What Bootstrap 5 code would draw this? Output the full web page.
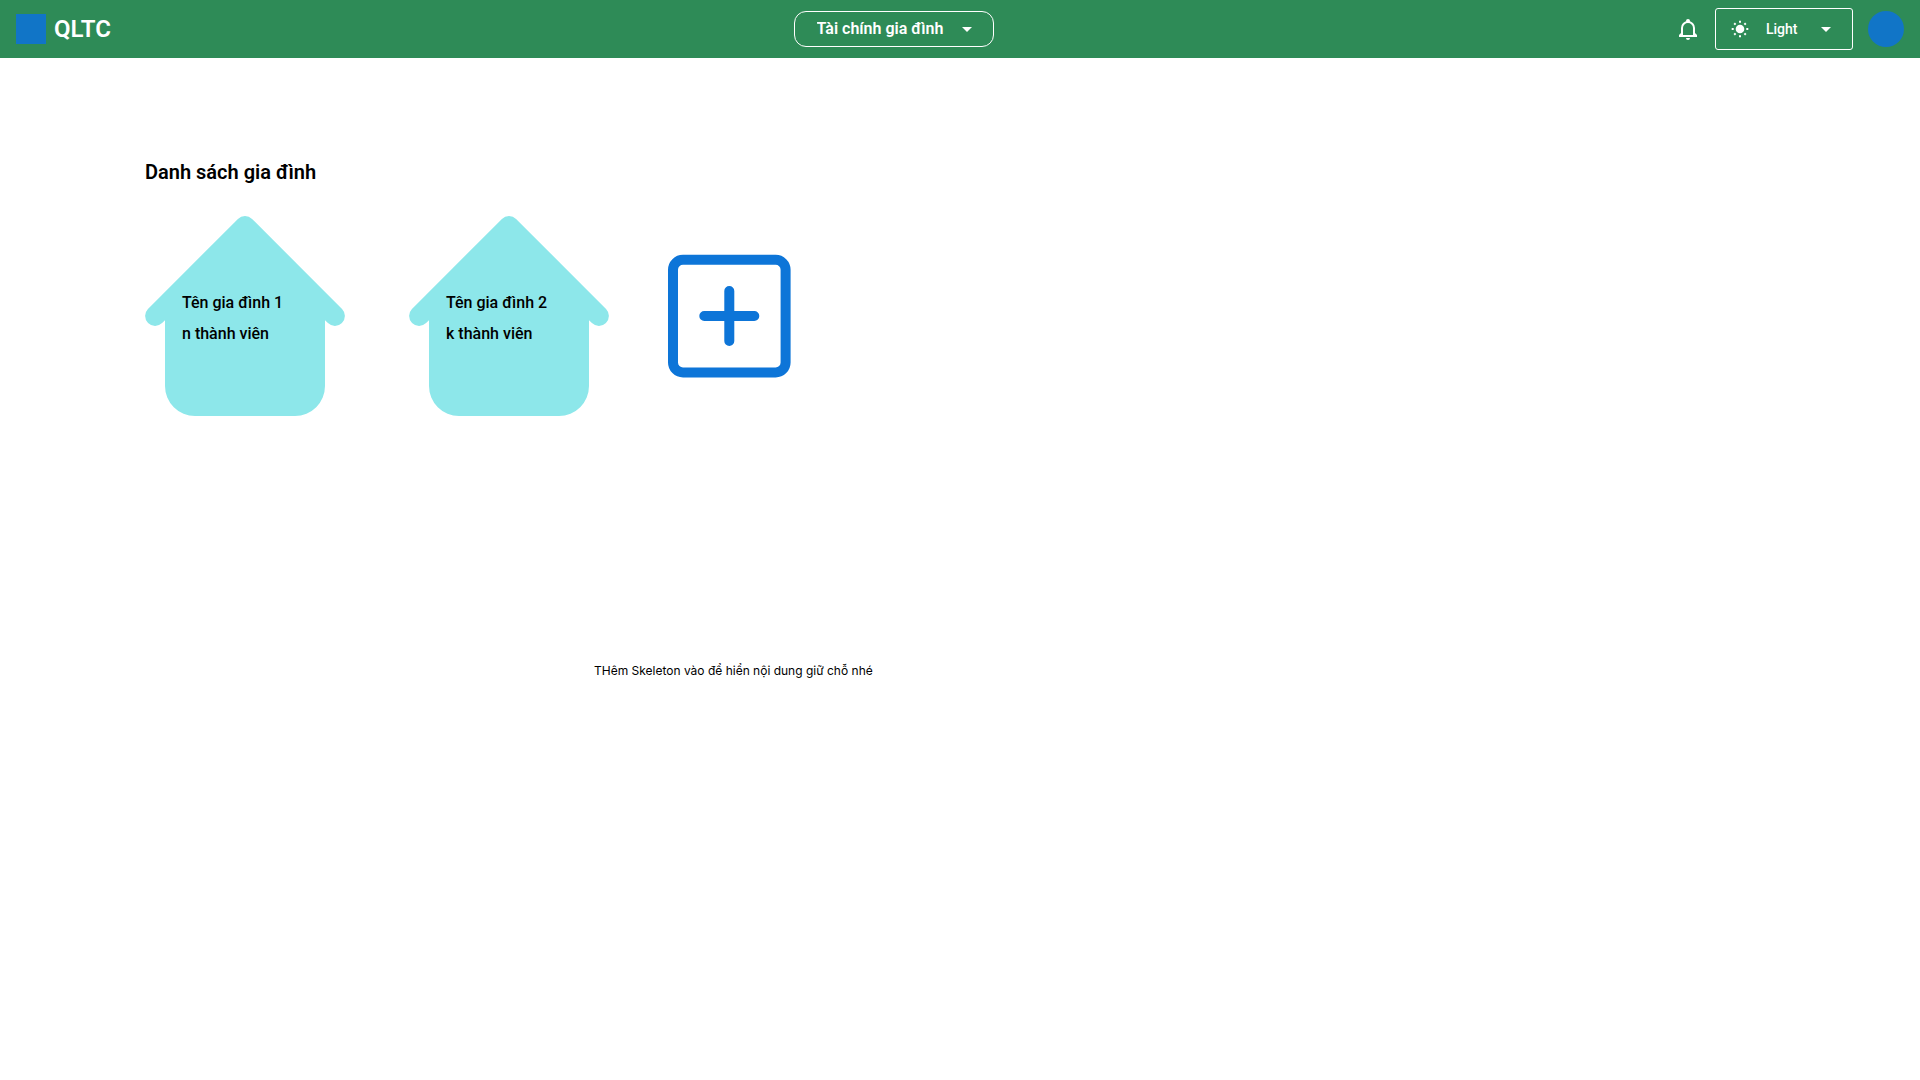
<!DOCTYPE html>
<html lang="vi">
<head>
<meta charset="utf-8">
<meta name="viewport" content="width=device-width, initial-scale=1">
<title>QLTC</title>
<link href="https://cdn.jsdelivr.net/npm/bootstrap@5.3.0/dist/css/bootstrap.min.css" rel="stylesheet">
<style>
  body { font-family: Roboto, "Liberation Sans", sans-serif; color: #000; background: #fff; }
  .topbar { background: #2e8b57; min-height: 58px; display: grid; grid-template-columns: 41fr 200px 48fr; }
  .brand-square { width: 30px; height: 30px; background: #1175c7; }
  .brand-name { font-size: 24px; line-height: 28px; font-weight: 600; }
  .topbar .form-select {
    --bs-form-select-bg-img: url("data:image/svg+xml,%3Csvg xmlns='http://www.w3.org/2000/svg' viewBox='0 0 10 5'%3E%3Cpath fill='%23fff' d='M0 0h10L5 5z'/%3E%3C/svg%3E");
    background-color: transparent; background-size: 10px 5px; color: #fff;
  }
  .topbar .form-select option { color: #000; }
  .finance-select { width: 200px; height: 36px; border: 1px solid #fff; border-radius: 12px; font-size: 16px; font-weight: 600; line-height: 20px; padding: 0 32px 0 22px; background-position: right 21px center; }
  .topbar-end { gap: 15px; }
  .theme-box { width: 138px; height: 42px; border: 1px solid #fff; border-radius: 3px; padding-left: 15px; }
  .theme-select { height: 40px; border: 0; font-size: 14px; font-weight: 500; line-height: 20px; padding: 0 32px 0 17px; background-position: right 21px center; }
  .avatar { width: 36px; height: 36px; background: #1175c7; }
  .page { padding: 100px 145px 0; }
  .page-title { font-size: 20px; line-height: 28px; font-weight: 600; }
  .family-list { gap: 64px; margin-top: 30px; }
  .house { display: grid; width: 200px; height: 200px; color: #000; }
  .house > * { grid-area: 1 / 1; }
  .house-text { font-size: 16px; line-height: 20px; font-weight: 500; padding: 77px 0 0 37px; gap: 11px; }
  .add-family { margin-left: -6px; }
  .note { font-family: Inter, sans-serif; font-size: 12px; line-height: 16px; margin-top: 247px; padding-left: 449px; }
</style>
</head>
<body>
<header class="topbar align-items-center px-3">
  <a href="#" class="d-flex align-items-center gap-2 text-white text-decoration-none">
    <span class="brand-square"></span><span class="brand-name">QLTC</span>
  </a>
  <select class="form-select finance-select" aria-label="Loại tài chính"><option>Tài chính gia đình</option></select>
  <div class="topbar-end d-flex align-items-center justify-content-end">
    <button type="button" class="btn p-0 border-0 d-flex" aria-label="Thông báo">
      <svg width="26" height="28" viewBox="0 0 26 28" fill="#fff"><path d="M8 21v-8a6 6 0 0 1 12 0v8" fill="none" stroke="#fff" stroke-width="2"/><path d="M5 22v-2l2-2v2h14v-2l2 2v2zM12 23h4a2 2 0 0 1-4 0z"/><circle cx="14" cy="6" r="2"/></svg>
    </button>
    <div class="theme-box d-flex align-items-center">
      <svg class="flex-shrink-0" width="18" height="18" viewBox="0 0 18 18" fill="#fff"><circle cx="9" cy="9" r="4.300"/><g stroke="#fff" stroke-width="2"><path d="M9 .7v2M9 15.300v2M.7 9h2M15.300 9h2M3.200 3.200l1.400 1.400M13.400 13.400l1.400 1.400M3.200 14.800l1.400-1.400M13.400 4.600l1.400-1.400"/></g></svg>
      <select class="form-select theme-select" aria-label="Giao diện"><option>Light</option></select>
    </div>
    <a href="#" class="avatar rounded-circle" aria-label="Tài khoản"></a>
  </div>
</header>
<main class="page">
  <h1 class="page-title mb-0">Danh sách gia đình</h1>
  <div class="family-list d-flex flex-wrap align-items-center">
    <a href="#" class="house text-decoration-none">
      <svg width="200" height="200" viewBox="0 0 200 200" fill="#8de7ea"><path d="M92.930 2.930A10 10 0 0 1 107.070 2.930L197.070 92.930A10 10 0 0 1 182.930 107.070L180 104.140V170A30 30 0 0 1 150 200H50A30 30 0 0 1 20 170V104.140L17.070 107.070A10 10 0 0 1 2.930 92.930Z"/></svg>
      <span class="house-text d-flex flex-column"><span>Tên gia đình 1</span><span>n thành viên</span></span>
    </a>
    <a href="#" class="house text-decoration-none">
      <svg width="200" height="200" viewBox="0 0 200 200" fill="#8de7ea"><path d="M92.930 2.930A10 10 0 0 1 107.070 2.930L197.070 92.930A10 10 0 0 1 182.930 107.070L180 104.140V170A30 30 0 0 1 150 200H50A30 30 0 0 1 20 170V104.140L17.070 107.070A10 10 0 0 1 2.930 92.930Z"/></svg>
      <span class="house-text d-flex flex-column"><span>Tên gia đình 2</span><span>k thành viên</span></span>
    </a>
    <button type="button" class="btn add-family p-0 border-0 d-flex" aria-label="Thêm gia đình">
      <svg width="124" height="124" viewBox="0 0 124 124" fill="none" stroke="#0d75d8" stroke-width="10"><rect x="6" y="5.800" width="112.600" height="112.600" rx="10"/><path stroke-linecap="round" d="M62.300 37v50M37.300 62h50"/></svg>
    </button>
  </div>
  <p class="note mb-0">THêm Skeleton vào để hiển nội dung giữ chỗ nhé</p>
</main>
<script src="https://cdn.jsdelivr.net/npm/bootstrap@5.3.0/dist/js/bootstrap.bundle.min.js"></script>
</body>
</html>
